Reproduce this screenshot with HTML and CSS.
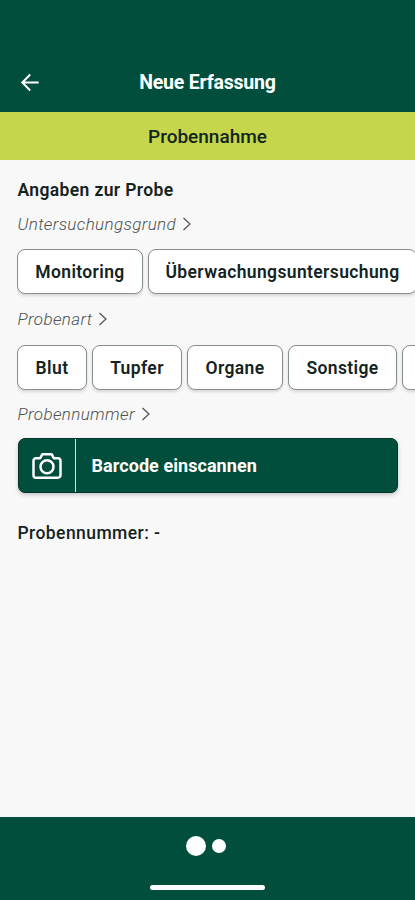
FILE: index.html
```html
<!DOCTYPE html>
<html lang="de">
<head>
<meta charset="utf-8">
<meta name="viewport" content="width=device-width">
<title>Neue Erfassung</title>
<link rel="stylesheet" href="styles.css">
</head>
<body>
<header class="topbar">
  <svg class="back" viewBox="0 0 20 20"><path d="M18.7 9.5H2.5M10.2 1.5L2.3 9.5l7.9 8"/></svg>
  <h1>Neue Erfassung</h1>
</header>
<div class="step">Probennahme</div>
<main>
  <h2>Angaben zur Probe</h2>
  <div class="label">Untersuchungsgrund<svg class="chevron" viewBox="0 0 10 14"><path d="M1.5 1l6.5 6-6.5 6"/></svg></div>
  <div class="chips reasons">
    <button class="chip monitoring">Monitoring</button>
    <button class="chip surveillance">Überwachungsuntersuchung</button>
  </div>
  <div class="label kind-label">Probenart<svg class="chevron" viewBox="0 0 10 14"><path d="M1.5 1l6.5 6-6.5 6"/></svg></div>
  <div class="chips kinds">
    <button class="chip blood">Blut</button>
    <button class="chip swab">Tupfer</button>
    <button class="chip organs">Organe</button>
    <button class="chip other">Sonstige</button>
    <button class="chip more" aria-label="Weitere"></button>
  </div>
  <div class="label number-label">Probennummer<svg class="chevron" viewBox="0 0 10 14"><path d="M1.5 1l6.5 6-6.5 6"/></svg></div>
  <button class="scan">
    <span class="scan-icon"><svg viewBox="0 0 30 28"><path d="M4 6.2h4.2l2.2-4h9.2l2.2 4H26A2.5 2.5 0 0 1 28.500 8.700v14.500a2.500 2.500 0 0 1-2.500 2.500H4a2.500 2.500 0 0 1-2.500-2.500V8.700A2.500 2.500 0 0 1 4 6.200z"/><circle cx="15" cy="14.800" r="6.500"/></svg></span>
    <span class="scan-text">Barcode einscannen</span>
  </button>
  <p class="result">Probennummer: -</p>
</main>
<footer>
  <div class="dots"><i class="dot active"></i><i class="dot"></i></div>
  <div class="home"></div>
</footer>
</body>
</html>
```
FILE: styles.css
```css
* { box-sizing: border-box; }
body {
  margin: 0;
  height: 900px;
  display: flex;
  flex-direction: column;
  overflow: hidden;
  background: #f8f8f8;
  color: #14231e;
  font-family: Roboto, "Liberation Sans", sans-serif;
}
h1, h2, p { margin: 0; }
button { font: inherit; color: inherit; padding: 0; }
svg { fill: none; stroke: currentColor; flex: none; }
.topbar {
  height: 112px;
  padding: 54px 20px 0;
  display: grid;
  grid-template-columns: 20px 1fr 20px;
  align-items: center;
  background: #004e3b;
  color: #fff;
}
.back { width: 20px; height: 20px; stroke-width: 2; }
h1 { text-align: center; font-size: 19.5px; line-height: 24px; font-weight: 700; letter-spacing: -.2px; }
.step {
  height: 48px;
  display: flex;
  align-items: center;
  justify-content: center;
  background: #c5d64d;
  font-size: 19px;
  font-weight: 500;
}
main { flex: 1; min-width: 0; padding: 18.500px 17px 0 17.5px; }
h2 { font-size: 17.5px; line-height: 22px; font-weight: 600; letter-spacing: .37px; }
.label {
  height: 22px;
  margin-top: 12px;
  display: flex;
  align-items: center;
  gap: 6px;
  font-size: 17px;
  font-style: italic;
  font-weight: 300;
  letter-spacing: .37px;
  color: #4c5250;
}
.kind-label { margin-top: 14px; }
.number-label { margin-top: 13px; }
.chevron { width: 10px; height: 14px; stroke-width: 1.2; }
.chips { display: flex; gap: 5px; height: 45px; margin: 14.500px -17px 0 -.5px; overflow-x: clip; }
.kinds { margin-top: 15px; }
.chip {
  flex: none;
  border: 1px solid #85908c;
  border-radius: 8px;
  background: #fff;
  box-shadow: 0 2px 3px #0002;
  font-size: 17.5px;
  font-weight: 600;
  letter-spacing: .37px;
}
.monitoring { width: 126px; }
.surveillance { width: 269px; }
.blood { width: 70px; }
.swab { width: 90px; }
.organs { width: 96px; }
.other { width: 109px; }
.more { width: 60px; }
.scan {
  display: flex;
  width: 380px;
  height: 55px;
  margin-top: 13px;
  border: 1px solid #043528;
  border-radius: 7px;
  background: #004e3b;
  color: #fff;
  box-shadow: 0 2px 4px #0003;
  overflow: hidden;
}
.scan-icon { width: 57px; border-right: 1px solid #d6e2de; display: grid; place-items: center; }
.scan-icon svg { width: 30px; height: 28px; stroke-width: 2.5; stroke-linejoin: round; }
.scan-text { display: flex; align-items: center; padding-left: 16px; font-size: 18px; font-weight: 700; letter-spacing: .06px; }
.result { margin-top: 29px; font-size: 17.5px; line-height: 22px; font-weight: 500; letter-spacing: .43px; }
footer {
  height: 83px;
  padding-top: 18px;
  display: flex;
  flex-direction: column;
  align-items: center;
  background: #004e3b;
}
.dots { height: 21px; margin-right: 3px; display: flex; align-items: center; gap: 6px; }
.dot { width: 14px; height: 14px; border-radius: 50%; background: #fff; }
.dot.active { width: 20px; height: 20px; }
.home { width: 115px; height: 5px; margin-top: 29px; border-radius: 3px; background: #fff; }
```
